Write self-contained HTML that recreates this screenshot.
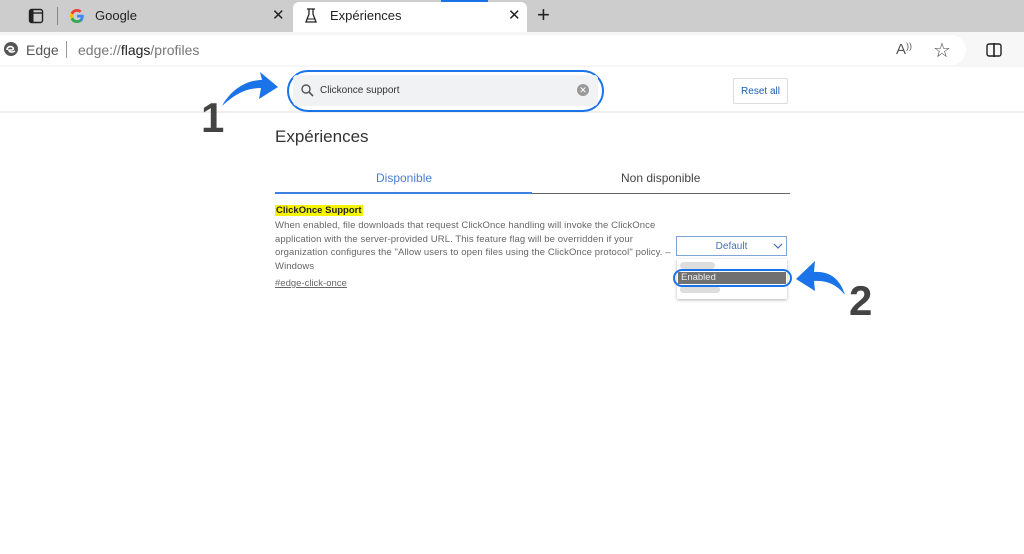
<!DOCTYPE html>
<html><head><meta charset="utf-8"><style>
*{margin:0;padding:0;box-sizing:border-box}
body{width:1024px;height:554px;position:relative;background:#fff;font-family:"Liberation Sans",sans-serif;overflow:hidden}
.abs{position:absolute}
</style></head><body>
<div class="abs" style="left:0;top:0;width:1024px;height:32px;background:#cdcdcd"></div>
<div class="abs" style="left:441px;top:0;width:47px;height:2px;background:#1a73e8"></div>
<svg class="abs" style="left:28px;top:8px" width="16" height="16"><rect x="1.5" y="1.5" width="13" height="13" rx="2" fill="none" stroke="#222" stroke-width="1.4"/><rect x="1.5" y="1.5" width="4" height="13" fill="#222"/><line x1="1.5" y1="5" x2="14.5" y2="5" stroke="#222" stroke-width="1.4"/></svg>
<div class="abs" style="left:57px;top:7px;width:1px;height:18px;background:#888"></div>
<svg class="abs" style="left:69px;top:8px" width="16" height="16" viewBox="0 0 16 16"><path d="M14.7 8.2c0-.5 0-1-.1-1.4H8v2.7h3.8a3.3 3.3 0 0 1-1.4 2.1v1.8h2.3c1.3-1.2 2-3 2-5.2z" fill="#4285f4"/><path d="M8 15c1.9 0 3.5-.6 4.7-1.7l-2.3-1.8c-.6.4-1.4.7-2.4.7-1.8 0-3.4-1.2-3.9-2.9H1.7v1.9A7 7 0 0 0 8 15z" fill="#34a853"/><path d="M4.1 9.3a4.2 4.2 0 0 1 0-2.6V4.8H1.7a7 7 0 0 0 0 6.4z" fill="#fbbc05"/><path d="M8 3.8c1 0 2 .4 2.7 1l2-2A7 7 0 0 0 1.7 4.8l2.4 1.9C4.6 5 6.2 3.8 8 3.8z" fill="#ea4335"/></svg>
<div class="abs" style="left:95px;top:8px;font-size:13px;color:#222">Google</div>
<div class="abs" style="left:272px;top:6px;font-size:15px;color:#222">✕</div>
<div class="abs" style="left:293px;top:2px;width:234px;height:30px;background:#fff;border-radius:6px 6px 0 0"></div>
<svg class="abs" style="left:304px;top:8px" width="14" height="16"><path d="M3 1h8M5 1v5L2 14h10L9 6V1" fill="none" stroke="#222" stroke-width="1.3"/><path d="M3.5 11h7" stroke="#222"/></svg>
<div class="abs" style="left:330px;top:8px;font-size:13px;color:#222">Expériences</div>
<div class="abs" style="left:508px;top:6px;font-size:15px;color:#222">✕</div>
<div class="abs" style="left:537px;top:2px;font-size:22px;color:#222;line-height:26px">+</div>
<div class="abs" style="left:0;top:32px;width:1024px;height:35px;background:#f7f7f7"></div>
<div class="abs" style="left:-20px;top:35px;width:986px;height:30px;background:#fff;border-radius:15px"></div>
<svg class="abs" style="left:3px;top:41px" width="16" height="16" viewBox="0 0 16 16"><circle cx="8" cy="8" r="7" fill="#555"/><path d="M4 9c0-3 3-4 5-3s2 3-1 3H6c0 2 3 3 6 1" fill="none" stroke="#fff" stroke-width="1.6"/></svg>
<div class="abs" style="left:26px;top:42px;font-size:14px;color:#555">Edge</div>
<div class="abs" style="left:66px;top:41px;width:1px;height:17px;background:#999"></div>
<div class="abs" style="left:78px;top:42px;font-size:14px;color:#777">edge://<span style="color:#222">flags</span>/profiles</div>
<div class="abs" style="left:896px;top:41px;font-size:15px;color:#555">A<span style="font-size:9px;vertical-align:top">))</span></div>
<div class="abs" style="left:933px;top:38px;font-size:20px;color:#444">☆</div>
<svg class="abs" style="left:986px;top:43px" width="16" height="14"><rect x="1" y="1" width="14" height="12" rx="2" fill="none" stroke="#222" stroke-width="1.4"/><line x1="8" y1="0" x2="8" y2="14" stroke="#222" stroke-width="1.6"/></svg>
<div class="abs" style="left:0;top:111px;width:1024px;height:2px;background:#eee"></div>
<div class="abs" style="left:287px;top:70px;width:317px;height:42px;border:2px solid #1a73e8;border-radius:21px"></div>
<div class="abs" style="left:293px;top:75px;width:305px;height:31px;background:#f1f2f4;border-radius:4px"></div>
<svg class="abs" style="left:301px;top:84px" width="13" height="13"><circle cx="5" cy="5" r="4" fill="none" stroke="#555" stroke-width="1.4"/><line x1="8" y1="8" x2="12" y2="12" stroke="#555" stroke-width="1.6"/></svg>
<div class="abs" style="left:320px;top:85px;font-size:10px;color:#333">Clickonce support</div>
<div class="abs" style="left:577px;top:84px;width:12px;height:12px;border-radius:50%;background:#999;color:#fff;font-size:9px;line-height:12px;text-align:center">✕</div>
<div class="abs" style="left:733px;top:78px;width:55px;height:26px;border:1px solid #ddd;border-radius:2px;font-size:10px;color:#1a5fb4;text-align:center;line-height:26px">Reset all</div>
<div class="abs" style="left:275px;top:127px;font-size:17px;color:#333">Expériences</div>
<div class="abs" style="left:376px;top:171px;font-size:12px;color:#4a7fd0">Disponible</div>
<div class="abs" style="left:621px;top:171px;font-size:12px;color:#444">Non disponible</div>
<div class="abs" style="left:275px;top:193px;width:515px;height:1px;background:#666"></div>
<div class="abs" style="left:275px;top:192px;width:257px;height:2px;background:#3b82e0"></div>
<div class="abs" style="left:275px;top:205px;font-size:9.5px;font-weight:bold;color:#222;background:#f5f500;padding:0 1px">ClickOnce Support</div>
<div class="abs" style="left:275px;top:219px;white-space:nowrap;font-size:9.5px;letter-spacing:0.1px;line-height:13.7px;color:#666">When enabled, file downloads that request ClickOnce handling will invoke the ClickOnce<br>application with the server-provided URL. This feature flag will be overridden if your<br>organization configures the "Allow users to open files using the ClickOnce protocol" policy. –<br>Windows</div>
<div class="abs" style="left:275px;top:278px;font-size:9.5px;color:#666;text-decoration:underline">#edge-click-once</div>
<div class="abs" style="left:676px;top:236px;width:111px;height:20px;border:1px solid #7fa5d8;font-size:10px;color:#4a6fb0;text-align:center;line-height:19px">Default</div>
<svg class="abs" style="left:773px;top:242px" width="10" height="8"><path d="M1 2l4 4 4-4" fill="none" stroke="#4a6fb0" stroke-width="1.2"/></svg>
<div class="abs" style="left:677px;top:259px;width:110px;height:40px;background:#fff;box-shadow:0 1px 3px rgba(0,0,0,.3)"></div>
<div class="abs" style="left:680px;top:262px;width:35px;height:7px;background:#ddd;border-radius:4px"></div>
<div class="abs" style="left:680px;top:286px;width:40px;height:7px;background:#ddd;border-radius:4px"></div>
<div class="abs" style="left:678px;top:272px;width:108px;height:12px;background:#707070;color:#eee;font-size:9.5px;line-height:12px;padding-left:3px">Enabled</div>
<div class="abs" style="left:673px;top:269px;width:119px;height:18px;border:2px solid #1a73e8;border-radius:9px"></div>
<svg class="abs" style="left:200px;top:66px" width="90" height="50"><path d="M22 40C30 25 45 14 62 14L60 6 78 21 59 33 61 22C45 22 34 29 22 40Z" fill="#1a73e8"/></svg>
<div class="abs" style="left:201px;top:96px;font-size:42px;font-weight:bold;color:#444;line-height:44px">1</div>
<svg class="abs" style="left:790px;top:255px" width="60" height="45"><path d="M55 40C50 24 40 16 24 17L25 6 6 24 25 36 24 26C38 25 48 31 55 40Z" fill="#1a73e8"/></svg>
<div class="abs" style="left:849px;top:279px;font-size:42px;font-weight:bold;color:#444;line-height:44px">2</div>
</body></html>
